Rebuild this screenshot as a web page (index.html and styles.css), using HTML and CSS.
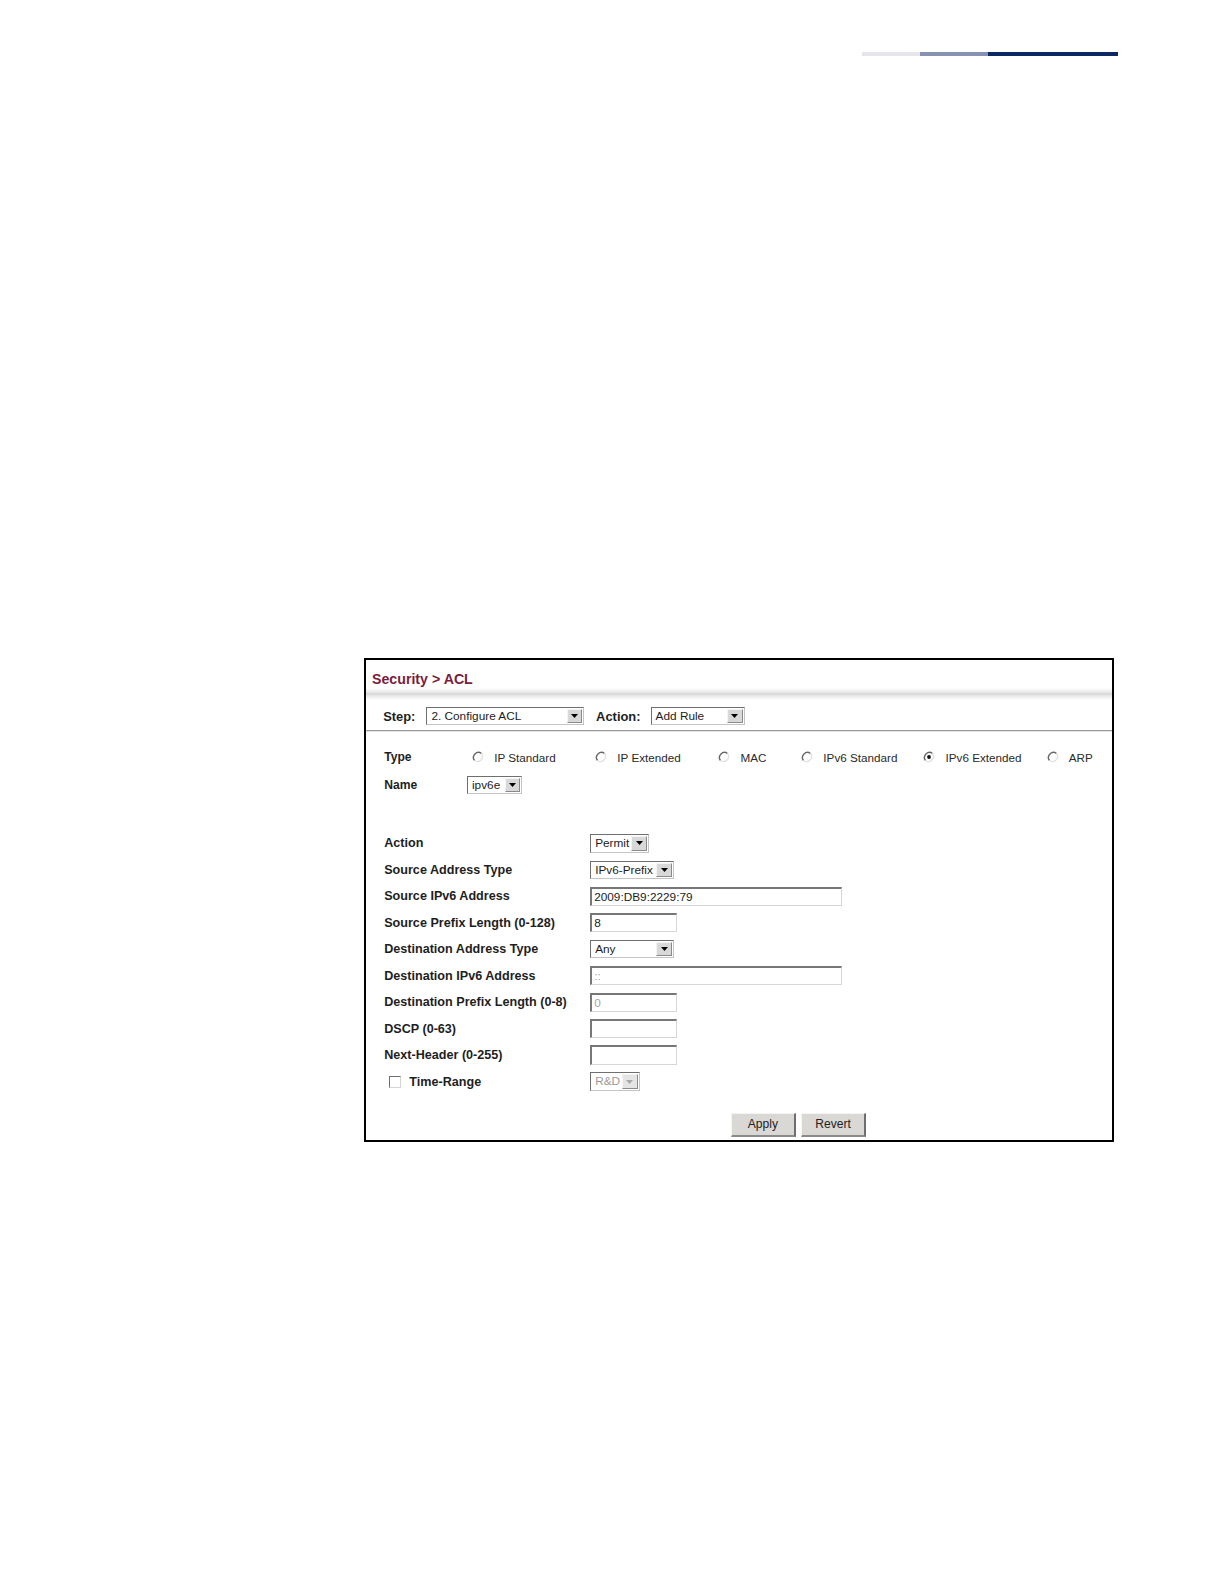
FILE: index.html
```html
<!DOCTYPE html>
<html>
<head>
<meta charset="utf-8">
<title>Security &gt; ACL</title>
<link rel="stylesheet" href="styles.css">
</head>
<body>
<div class="topbar"><span class="seg s1"></span><span class="seg s2"></span><span class="seg s3"></span></div>

<div class="panel">
  <div class="title">Security &gt; ACL</div>
  <div class="shade"></div>
  <div class="steprow">
    <span class="blbl">Step:</span>
    <div class="sel step-sel"><span class="val">2. Configure ACL</span><span class="arrow"><svg width="7" height="4" viewBox="0 0 7 4"><path d="M0 0h7L3.5 4z" fill="#000"/></svg></span></div>
    <span class="blbl action-lbl">Action:</span>
    <div class="sel action-sel"><span class="val">Add Rule</span><span class="arrow"><svg width="7" height="4" viewBox="0 0 7 4"><path d="M0 0h7L3.5 4z" fill="#000"/></svg></span></div>
  </div>
  <div class="sep"></div>

  <div class="typerow">
    <span class="blbl tlbl">Type</span>
    <div class="radios">
      <label class="radio"><svg class="rb" width="12" height="12" viewBox="0 0 12 12"><circle cx="6" cy="6" r="5" fill="#fff"/><path d="M2.5 9.5A5 5 0 0 1 9.5 2.5" fill="none" stroke="#666" stroke-width="1.4"/><path d="M9.5 2.5A5 5 0 0 1 2.5 9.5" fill="none" stroke="#e2e2e2" stroke-width="1.3"/></svg><span>IP Standard</span></label>
      <label class="radio"><svg class="rb" width="12" height="12" viewBox="0 0 12 12"><circle cx="6" cy="6" r="5" fill="#fff"/><path d="M2.5 9.5A5 5 0 0 1 9.5 2.5" fill="none" stroke="#666" stroke-width="1.4"/><path d="M9.5 2.5A5 5 0 0 1 2.5 9.5" fill="none" stroke="#e2e2e2" stroke-width="1.3"/></svg><span>IP Extended</span></label>
      <label class="radio"><svg class="rb" width="12" height="12" viewBox="0 0 12 12"><circle cx="6" cy="6" r="5" fill="#fff"/><path d="M2.5 9.5A5 5 0 0 1 9.5 2.5" fill="none" stroke="#666" stroke-width="1.4"/><path d="M9.5 2.5A5 5 0 0 1 2.5 9.5" fill="none" stroke="#e2e2e2" stroke-width="1.3"/></svg><span>MAC</span></label>
      <label class="radio"><svg class="rb" width="12" height="12" viewBox="0 0 12 12"><circle cx="6" cy="6" r="5" fill="#fff"/><path d="M2.5 9.5A5 5 0 0 1 9.5 2.5" fill="none" stroke="#666" stroke-width="1.4"/><path d="M9.5 2.5A5 5 0 0 1 2.5 9.5" fill="none" stroke="#e2e2e2" stroke-width="1.3"/></svg><span>IPv6 Standard</span></label>
      <label class="radio"><svg class="rb" width="12" height="12" viewBox="0 0 12 12"><circle cx="6" cy="6" r="5" fill="#fff"/><path d="M2.5 9.5A5 5 0 0 1 9.5 2.5" fill="none" stroke="#666" stroke-width="1.4"/><path d="M9.5 2.5A5 5 0 0 1 2.5 9.5" fill="none" stroke="#e2e2e2" stroke-width="1.3"/><circle cx="6" cy="6" r="1.9" fill="#111"/></svg><span>IPv6 Extended</span></label>
      <label class="radio"><svg class="rb" width="12" height="12" viewBox="0 0 12 12"><circle cx="6" cy="6" r="5" fill="#fff"/><path d="M2.5 9.5A5 5 0 0 1 9.5 2.5" fill="none" stroke="#666" stroke-width="1.4"/><path d="M9.5 2.5A5 5 0 0 1 2.5 9.5" fill="none" stroke="#e2e2e2" stroke-width="1.3"/></svg><span>ARP</span></label>
    </div>
  </div>

  <div class="namerow">
    <span class="blbl tlbl">Name</span>
    <div class="sel name-sel"><span class="val">ipv6e</span><span class="arrow"><svg width="7" height="4" viewBox="0 0 7 4"><path d="M0 0h7L3.5 4z" fill="#000"/></svg></span></div>
  </div>

  <div class="form">
    <div class="frow"><span class="blbl flbl">Action</span><div class="sel permit-sel"><span class="val">Permit</span><span class="arrow"><svg width="7" height="4" viewBox="0 0 7 4"><path d="M0 0h7L3.5 4z" fill="#000"/></svg></span></div></div>
    <div class="frow"><span class="blbl flbl">Source Address Type</span><div class="sel type-sel"><span class="val">IPv6-Prefix</span><span class="arrow"><svg width="7" height="4" viewBox="0 0 7 4"><path d="M0 0h7L3.5 4z" fill="#000"/></svg></span></div></div>
    <div class="frow"><span class="blbl flbl">Source IPv6 Address</span><div class="inp long">2009:DB9:2229:79</div></div>
    <div class="frow"><span class="blbl flbl">Source Prefix Length (0-128)</span><div class="inp short">8</div></div>
    <div class="frow"><span class="blbl flbl">Destination Address Type</span><div class="sel type-sel"><span class="val">Any</span><span class="arrow"><svg width="7" height="4" viewBox="0 0 7 4"><path d="M0 0h7L3.5 4z" fill="#000"/></svg></span></div></div>
    <div class="frow"><span class="blbl flbl">Destination IPv6 Address</span><div class="inp long disabled">::</div></div>
    <div class="frow"><span class="blbl flbl">Destination Prefix Length (0-8)</span><div class="inp short disabled">0</div></div>
    <div class="frow"><span class="blbl flbl">DSCP (0-63)</span><div class="inp short"></div></div>
    <div class="frow"><span class="blbl flbl">Next-Header (0-255)</span><div class="inp short"></div></div>
    <div class="frow"><span class="blbl flbl cblbl"><span class="cbox"></span>Time-Range</span><div class="sel rd-sel disabled"><span class="val">R&amp;D</span><span class="arrow"><svg width="7" height="4" viewBox="0 0 7 4"><path d="M0 0h7L3.5 4z" fill="#a8a8a8"/></svg></span></div></div>
  </div>

  <div class="buttons">
    <span class="btn apply">Apply</span>
    <span class="btn revert">Revert</span>
  </div>
</div>
</body>
</html>
```

FILE: styles.css
```css
html, body {
  margin: 0;
  padding: 0;
  background: #fff;
}
body {
  width: 1224px;
  font-family: "Liberation Sans", Arial, sans-serif;
  color: #1a1a1a;
}

.topbar {
  display: flex;
  margin: 52px 0 0 862px;
  width: 256px;
  height: 4px;
}
.seg { display: block; height: 4px; }
.s1 { width: 58px; background: #e6e6ea; }
.s2 { width: 68px; background: #8791b1; }
.s3 { flex: 1; background: #0b2863; }

.panel {
  margin: 602px 0 0 364px;
  width: 750px;
  box-sizing: border-box;
  border: 2px solid #000;
  padding-bottom: 3px;
}

.title {
  padding: 9.5px 0 0 6px;
  line-height: 18.3px;
  height: 18.3px;
  font-size: 14.2px;
  font-weight: bold;
  color: #7b1d3d;
}
.shade {
  height: 12.1px;
  background: linear-gradient(to bottom, #fff 0%, #e9e9e9 35%, #d6d6d6 50%, #e9e9e9 65%, #fff 100%);
}

.blbl {
  font-weight: bold;
  font-size: 12.6px;
  color: #1e1e1e;
  white-space: nowrap;
}

.steprow {
  display: flex;
  align-items: center;
  padding: 7.1px 0 5px 17.2px;
  height: 18.2px;
}
.steprow .blbl { font-size: 12.9px; }
.step-sel { margin-left: 11px; width: 157.6px; }
.action-lbl { margin-left: 12.1px; }
.action-sel { margin-left: 10.1px; width: 94px; }

.sep {
  height: 1px;
  background: #9c9c9c;
  border-bottom: 1px solid #e2e2e2;
}

/* selects */
.sel {
  box-sizing: border-box;
  height: 18.2px;
  display: flex;
  align-items: stretch;
  border-top: 1px solid #6f6f6f;
  border-left: 1px solid #6f6f6f;
  border-right: 1px solid #c4c4c4;
  border-bottom: 1px solid #c4c4c4;
  background: #fff;
}
.sel .val {
  flex: 1;
  font-size: 11.8px;
  line-height: 16px;
  padding-left: 4px;
  color: #1c1c1c;
  white-space: nowrap;
  overflow: hidden;
}
.sel .arrow {
  width: 15.5px;
  margin: 1px 1px 1px 0;
  box-sizing: border-box;
  background: #d8d8d8;
  border-top: 1px solid #f4f4f4;
  border-left: 1px solid #f4f4f4;
  border-right: 1px solid #8a8a8a;
  border-bottom: 1px solid #8a8a8a;
  display: flex;
  align-items: center;
  justify-content: center;
}
.sel.disabled .val { color: #9a9a9a; }
.sel.disabled .arrow { background: #e4e4e4; }

.name-sel { width: 55.5px; }
.permit-sel { width: 58.6px; }
.type-sel { width: 83.8px; }
.rd-sel { width: 49.5px; }

/* type / name */
.typerow {
  display: flex;
  align-items: center;
  height: 20.2px;
  margin-top: 15.2px;
  padding-left: 18.2px;
}
.tlbl { width: 82.8px; font-size: 12.1px; }
.radios {
  display: grid;
  grid-template-columns: 123.2px 123.2px 82.8px 122.2px 123.2px auto;
  padding-left: 5px;
}
.radio {
  display: flex;
  align-items: center;
  font-size: 11.7px;
  color: #2a2a2a;
}
.rb { display: block; margin-right: 10.2px; }

.namerow {
  display: flex;
  align-items: center;
  height: 18.2px;
  margin-top: 8.1px;
  padding-left: 18.2px;
}

/* form */
.form {
  margin-top: 36.4px;
  padding-left: 18.2px;
}
.frow {
  display: flex;
  align-items: center;
  height: 26.46px;
}
.flbl { width: 206px; }
.cblbl {
  display: flex;
  align-items: center;
  padding-left: 5px;
  width: 201px;
}
.cbox {
  display: block;
  width: 12px;
  height: 12px;
  box-sizing: border-box;
  border-top: 1px solid #707070;
  border-left: 1px solid #707070;
  border-right: 1px solid #d4d4d4;
  border-bottom: 1px solid #d4d4d4;
  background: #fff;
  margin-right: 8.1px;
}

.inp {
  box-sizing: border-box;
  height: 19.2px;
  border-top: 2px solid #777;
  border-left: 2px solid #777;
  border-right: 1px solid #d6d6d6;
  border-bottom: 1px solid #d6d6d6;
  font-size: 11.8px;
  line-height: 16px;
  padding-left: 2px;
  color: #1c1c1c;
  background: #fff;
}
.inp.long { width: 251.5px; }
.inp.short { width: 86.9px; }
.inp.disabled { color: #a4a4a4; }

/* buttons */
.buttons {
  display: flex;
  margin-top: 18.7px;
  padding-left: 364.6px;
  gap: 5px;
}
.btn {
  box-sizing: border-box;
  height: 23.3px;
  line-height: 20.3px;
  text-align: center;
  font-size: 12.1px;
  color: #222;
  background: #d9d8d4;
  border-top: 1px solid #f4f4f4;
  border-left: 1px solid #f4f4f4;
  border-right: 2px solid #6e6e6e;
  border-bottom: 2px solid #8a8a8a;
}
.apply { width: 65.7px; }
.revert { width: 64.6px; }
```
